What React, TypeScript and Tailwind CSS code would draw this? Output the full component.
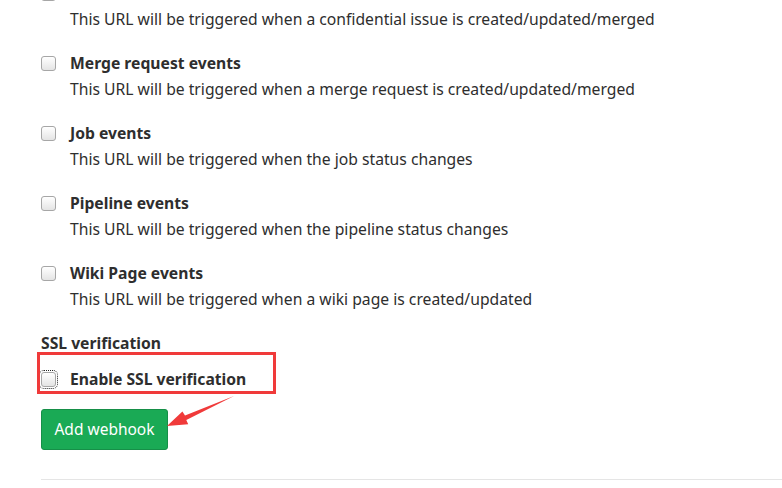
import React from "react";

const items = [
  { label: "Confidential issues events", desc: "This URL will be triggered when a confidential issue is created/updated/merged" },
  { label: "Merge request events", desc: "This URL will be triggered when a merge request is created/updated/merged" },
  { label: "Job events", desc: "This URL will be triggered when the job status changes" },
  { label: "Pipeline events", desc: "This URL will be triggered when the pipeline status changes" },
  { label: "Wiki Page events", desc: "This URL will be triggered when a wiki page is created/updated" },
];

function Box({ focused = false }: { focused?: boolean }) {
  return (
    <span
      className={
        "inline-block w-[15px] h-[15px] rounded-[3px] border border-[#a6a6a6] bg-gradient-to-b from-[#ffffff] to-[#e4e4e4] shrink-0 " +
        (focused ? "outline outline-1 outline-dotted outline-[#222] outline-offset-[1px]" : "")
      }
    />
  );
}

export default function App() {
  return (
    <div
      className="relative w-[782px] h-[488px] overflow-hidden bg-white text-[#2e2e2e]"
      style={{ fontFamily: '"Noto Sans", sans-serif' }}
    >
      <div className="pl-[41px] mt-[-17px]">
        {items.map((it) => (
          <div key={it.label} className="mb-[24px]">
            <div className="flex items-center h-[20px]">
              <Box />
              <span className="ml-[14px] font-bold text-[15.7px] leading-[20px]">{it.label}</span>
            </div>
            <div className="mt-[6px] leading-[20px] pl-[29px] text-[15.7px]">{it.desc}</div>
          </div>
        ))}
        <div className="mt-[1px] h-[20px] leading-[20px] font-bold text-[15.7px]">SSL verification</div>
        <div className="mt-[16px] flex items-center h-[20px]">
          <Box focused />
          <span className="ml-[14px] font-bold text-[15.7px] leading-[20px]">Enable SSL verification</span>
        </div>
        <button className="mt-[20px] h-[41px] w-[127px] rounded-[3px] bg-[#1aaa55] border border-[#168f48] text-white text-[15.5px] flex items-center justify-center">
          Add webhook
        </button>
        <div className="mt-[29px] border-t border-[#e5e5e5]" />
      </div>

      {/* annotations */}
      <div className="absolute left-[37px] top-[352px] w-[239px] h-[42px] border-[3px] border-[#f03a3a]" />
      <svg className="absolute left-0 top-0" width="782" height="488" viewBox="0 0 782 488">
        <polygon
          points="234,396 185,415.6 182.4,411.4 167,426 188.2,424.2 186.3,420"
          fill="#f03a3a"
        />
      </svg>
    </div>
  );
}
